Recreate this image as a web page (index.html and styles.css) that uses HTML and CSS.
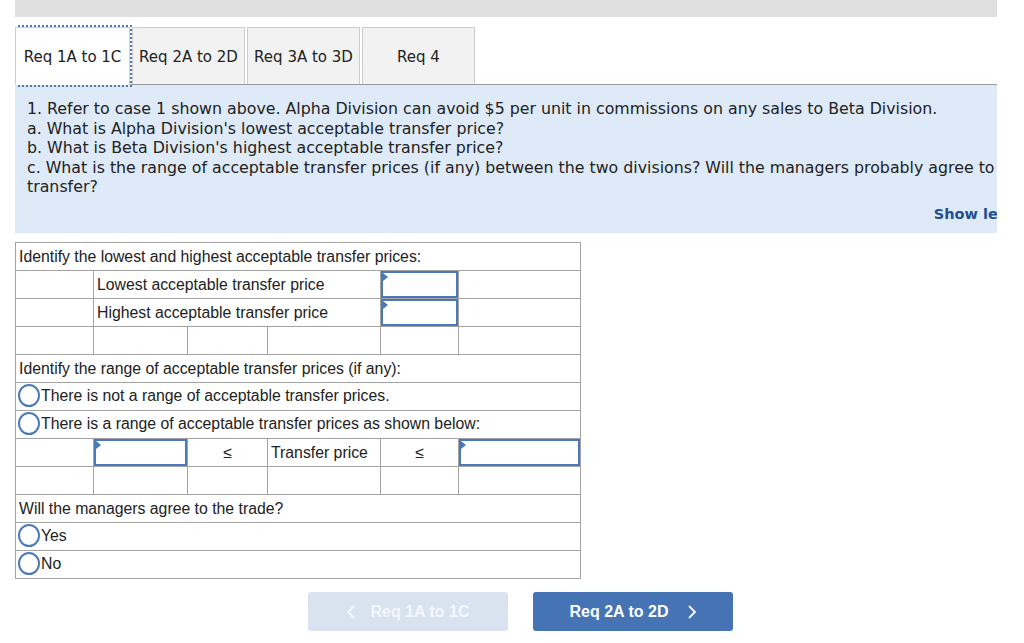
FILE: index.html
```html
<!DOCTYPE html>
<html lang="en">
<head>
    <meta charset="UTF-8">
    <title>Transfer Pricing</title>
    <link rel="stylesheet" href="styles.css">
</head>
<body>
<div class="page">
    <div class="top-bar"></div>

    <!-- Requirement tabs -->
    <div class="tabs">
        <div class="tab active">Req 1A to 1C</div>
        <div class="tab">Req 2A to 2D</div>
        <div class="tab">Req 3A to 3D</div>
        <div class="tab">Req 4</div>
    </div>

    <!-- Question text -->
    <div class="question">
        <p>1. Refer to case 1 shown above. Alpha Division can avoid $5 per unit in commissions on any sales to Beta Division.</p>
        <p>a. What is Alpha Division's lowest acceptable transfer price?</p>
        <p>b. What is Beta Division's highest acceptable transfer price?</p>
        <p>c. What is the range of acceptable transfer prices (if any) between the two divisions? Will the managers probably agree to<br>transfer?</p>
        <div class="show-less">Show less</div>
    </div>

    <!-- Answer grid -->
    <table class="answer">
        <colgroup>
            <col style="width:78px">
            <col style="width:94px">
            <col style="width:80px">
            <col style="width:113px">
            <col style="width:78px">
            <col style="width:122px">
        </colgroup>
        <tr><td colspan="6">Identify the lowest and highest acceptable transfer prices:</td></tr>
        <tr>
            <td></td>
            <td colspan="3">Lowest acceptable transfer price</td>
            <td class="input-cell"><span class="field"><input type="text"></span></td>
            <td></td>
        </tr>
        <tr>
            <td></td>
            <td colspan="3">Highest acceptable transfer price</td>
            <td class="input-cell"><span class="field"><input type="text"></span></td>
            <td></td>
        </tr>
        <tr><td></td><td></td><td></td><td></td><td></td><td></td></tr>
        <tr><td colspan="6">Identify the range of acceptable transfer prices (if any):</td></tr>
        <tr><td colspan="6" class="radio-cell"><span class="radio"></span>There is not a range of acceptable transfer prices.</td></tr>
        <tr><td colspan="6" class="radio-cell"><span class="radio"></span>There is a range of acceptable transfer prices as shown below:</td></tr>
        <tr>
            <td></td>
            <td class="input-cell"><span class="field"><input type="text"></span></td>
            <td class="center">&le;</td>
            <td>Transfer price</td>
            <td class="center">&le;</td>
            <td class="input-cell"><span class="field"><input type="text"></span></td>
        </tr>
        <tr><td></td><td></td><td></td><td></td><td></td><td></td></tr>
        <tr><td colspan="6">Will the managers agree to the trade?</td></tr>
        <tr><td colspan="6" class="radio-cell"><span class="radio"></span>Yes</td></tr>
        <tr><td colspan="6" class="radio-cell"><span class="radio"></span>No</td></tr>
    </table>

    <!-- Navigation -->
    <div class="nav">
        <button class="nav-btn disabled">
            <svg class="chev" width="8" height="14" viewBox="0 0 8 14"><path d="M7 1 L1 7 L7 13" fill="none" stroke="currentColor" stroke-width="1.8"/></svg>
            Req 1A to 1C
        </button>
        <button class="nav-btn next">
            Req 2A to 2D
            <svg class="chev" width="8" height="14" viewBox="0 0 8 14"><path d="M1 1 L7 7 L1 13" fill="none" stroke="currentColor" stroke-width="1.8"/></svg>
        </button>
    </div>
</div>
</body>
</html>
```

FILE: styles.css
```css
body {
    margin: 0;
    font-family: "Liberation Sans", Arial, sans-serif;
    background-color: #fff;
    color: #222;
}

.page {
    width: 982px;
    margin-left: 15px;
    overflow: hidden;
}

.top-bar {
    height: 17px;
    background-color: #e0e0e0;
}

/* tabs */
.tabs {
    display: flex;
    gap: 2px;
    margin-top: 10px;
    border-bottom: 1px solid #999;
    font-family: "DejaVu Sans", Verdana, sans-serif;
    font-size: 15px;
}

.tab {
    width: 111px;
    height: 54px;
    padding-top: 2px;
    margin-bottom: -1px;
    display: flex;
    align-items: center;
    justify-content: center;
    background-color: #f2f2f2;
    border: 1px solid #ccc;
    border-bottom: none;
    color: #222;
}

.tab.active {
    width: 113px;
    background-color: #fff;
    outline: 2px dotted #4a78b8;
    outline-offset: 0;
    border-bottom: 1px solid #fff;
}

/* question */
.question {
    width: 988px;
    background-color: #deeaf7;
    padding: 14px 12px 9px 12px;
    font-family: "DejaVu Sans", Verdana, sans-serif;
    font-size: 15.8px;
    line-height: 19.5px;
    color: #222;
}

.question p {
    margin: 0;
    white-space: nowrap;
}

.show-less {
    text-align: right;
    margin-top: 8px;
    font-size: 14.5px;
    font-weight: bold;
    color: #22508f;
}

/* answer table */
.answer {
    margin-top: 9px;
    border-collapse: collapse;
    table-layout: fixed;
    width: 565px;
    font-size: 15.8px;
    color: #222;
}

.answer td {
    height: 27px;
    border: 1px solid #a3a3a3;
    padding: 0 3px;
    white-space: nowrap;
}

.answer td.center {
    text-align: center;
}

.answer td.input-cell {
    padding: 0;
}

.field {
    position: relative;
    display: block;
}

.field::before {
    content: "";
    position: absolute;
    left: 2px;
    top: 2px;
    border-top: 4px solid transparent;
    border-bottom: 4px solid transparent;
    border-left: 5px solid #4a78b8;
}

.field input {
    display: block;
    width: 100%;
    height: 27px;
    box-sizing: border-box;
    border: 2px solid #4a78b8;
    margin: 0;
    padding: 0 4px;
    background: #fff;
}

.radio-cell {
    padding-left: 2px !important;
}

.radio {
    display: inline-block;
    width: 18px;
    height: 19px;
    border: 2px solid #4a7ab8;
    border-radius: 50%;
    vertical-align: middle;
    margin-right: 1px;
    position: relative;
    top: -1px;
}

/* navigation buttons */
.nav {
    display: flex;
    gap: 25px;
    padding-left: 293px;
    margin-top: 13px;
    padding-bottom: 12px;
}

.nav-btn {
    width: 200px;
    height: 39px;
    border: none;
    border-radius: 3px;
    display: flex;
    align-items: center;
    justify-content: center;
    gap: 16px;
    font-family: "Liberation Sans", Arial, sans-serif;
    font-size: 16px;
    font-weight: bold;
    color: #fff;
    cursor: pointer;
}

.nav-btn.disabled {
    background-color: #d9e3ef;
    color: #f4f7fb;
}

.nav-btn.next {
    background-color: #4573b4;
    gap: 20px;
}
```
